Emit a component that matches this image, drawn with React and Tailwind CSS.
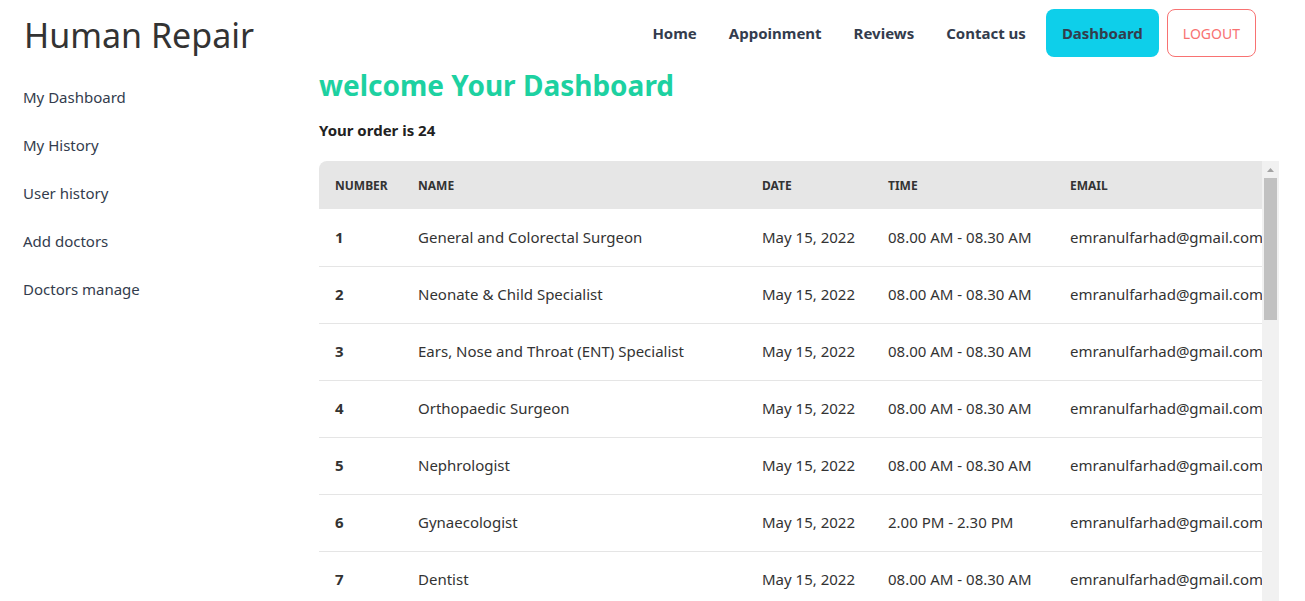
const NAV = ['Home', 'Appoinment', 'Reviews', 'Contact us']
const SIDE = ['My Dashboard', 'My History', 'User history', 'Add doctors', 'Doctors manage']

const ORDERS = [
  { name: 'General and Colorectal Surgeon', time: '08.00 AM - 08.30 AM' },
  { name: 'Neonate & Child Specialist', time: '08.00 AM - 08.30 AM' },
  { name: 'Ears, Nose and Throat (ENT) Specialist', time: '08.00 AM - 08.30 AM' },
  { name: 'Orthopaedic Surgeon', time: '08.00 AM - 08.30 AM' },
  { name: 'Nephrologist', time: '08.00 AM - 08.30 AM' },
  { name: 'Gynaecologist', time: '2.00 PM - 2.30 PM' },
  { name: 'Dentist', time: '08.00 AM - 08.30 AM' },
  { name: 'Cardiologist', time: '08.00 AM - 08.30 AM' },
]

export default function App() {
  return (
    <div className="h-screen overflow-hidden bg-white text-[#333] font-['Noto_Sans',sans-serif]">
      {/* header */}
      <header className="flex items-center justify-between pl-6 pr-[49px] py-[9px]">
        <h1 className="text-[34px] leading-none text-[#333] mt-1">Human Repair</h1>
        <nav className="flex items-center">
          {NAV.map(n => (
            <a key={n} className="px-4 text-[15px] font-bold text-[#333c4d]">{n}</a>
          ))}
          <button className="ml-1 h-12 px-4 rounded-lg bg-[#0ecfea] text-[15px] font-bold text-[#333c4d]">Dashboard</button>
          <button className="ml-2 h-12 px-[15px] rounded-lg border border-[#f87272] text-[14px] text-[#f87272] uppercase">Logout</button>
        </nav>
      </header>

      <div className="flex">
        {/* sidebar */}
        <aside className="w-[319px] shrink-0 pl-[23px] pt-[7px]">
          {SIDE.map(s => (
            <div key={s} className="h-12 flex items-center text-[15px] text-[#333c4d]">{s}</div>
          ))}
        </aside>

        {/* main */}
        <main className="flex-1 min-w-0 pr-[26px] pt-px">
          <h2 className="text-[28px] leading-9 font-bold text-[#1dd1a1]">welcome Your Dashboard</h2>
          <p className="mt-4 text-[15px] leading-[22px] font-bold text-[#222]">Your order is 24</p>

          <div className="mt-5 flex h-[480px]">
            <div className="flex-1 min-w-0 overflow-hidden">
              <table className="table-fixed border-collapse w-[1000px] text-left">
                <thead>
                  <tr className="h-12 bg-[#e6e6e6] text-[12px] font-bold uppercase text-[#333]">
                    <th className="w-[83px] pl-4 pt-px rounded-tl-lg">Number</th>
                    <th className="w-[344px] pl-4 pt-px">Name</th>
                    <th className="w-[126px] pl-4 pt-px">Date</th>
                    <th className="w-[182px] pl-4 pt-px">Time</th>
                    <th className="pl-4 pt-px">Email</th>
                  </tr>
                </thead>
                <tbody className="text-[15px] text-[#333]">
                  {ORDERS.map((o, i) => (
                    <tr key={i} className="h-[57px] border-b border-[#e5e5e5]">
                      <td className="pl-4 font-bold">{i + 1}</td>
                      <td className="pl-4 whitespace-nowrap">{o.name}</td>
                      <td className="pl-4 whitespace-nowrap">May 15, 2022</td>
                      <td className="pl-4 whitespace-nowrap">{o.time}</td>
                      <td className="pl-4 whitespace-nowrap">emranulfarhad@gmail.com</td>
                    </tr>
                  ))}
                </tbody>
              </table>
            </div>
            {/* scrollbar */}
            <div className="w-[17px] shrink-0 bg-[#f1f1f1] flex flex-col items-center">
              <svg width="17" height="17" viewBox="0 0 17 17" className="shrink-0">
                <path d="M5 11 L8.5 7 L12 11 Z" fill="#a3a3a3" />
              </svg>
              <div className="w-[13px] h-[142px] bg-[#c1c1c1]" />
            </div>
          </div>
        </main>
      </div>
    </div>
  )
}
